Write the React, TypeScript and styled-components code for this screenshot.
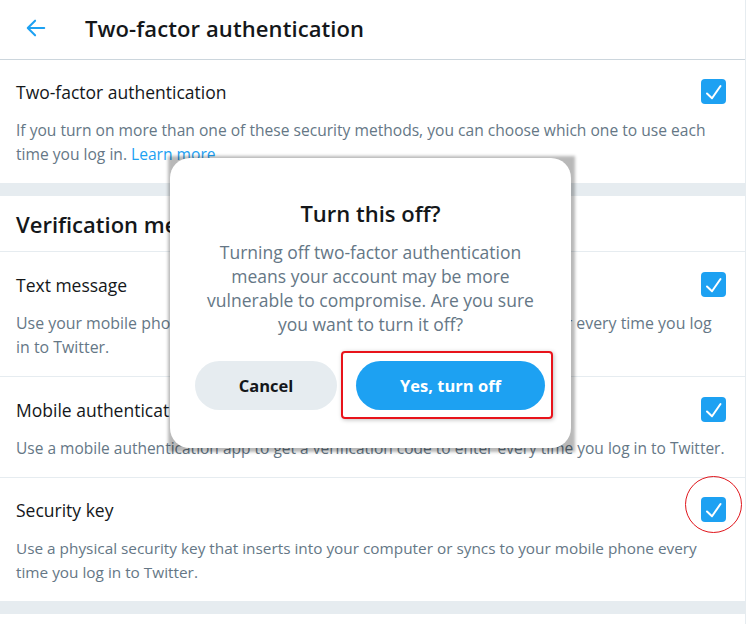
import React from "react";
import styled, { createGlobalStyle } from "styled-components";

const GlobalStyle = createGlobalStyle`
  html, body { margin: 0; padding: 0; background: #ffffff; }
  body { font-family: "Open Sans", "Noto Sans", Arial, sans-serif; -webkit-font-smoothing: antialiased; }
  * { box-sizing: border-box; }
`;

const Page = styled.div`
  position: relative;
  width: 746px;
  min-height: 624px;
  border-right: 1px solid #e6ecf0;
  background: #fff;
`;

const Header = styled.header`
  height: 60px;
  display: flex;
  align-items: center;
  border-bottom: 1px solid #ccd6dd;
  padding: 0 0 3px 25px;
  gap: 38px;
`;

const BackButton = styled.button`
  border: none;
  background: none;
  padding: 0;
  width: 22px;
  height: 22px;
  display: flex;
  align-items: center;
  justify-content: center;
  color: #1da1f2;
  cursor: pointer;
`;

const HeaderTitle = styled.h1`
  margin: 0;
  font-size: 22px;
  font-weight: 600;
  color: #14171a;
  letter-spacing: 0.1px;
`;

const Band = styled.div`
  height: 13px;
  background: #e6ecf0;
`;

const Row = styled.section<{ $divider?: boolean }>`
  padding: ${(p) => (p.$divider ? "20px" : "19px")} 16px 17px;
  border-bottom: ${(p) => (p.$divider ? "1px solid #e6ecf0" : "none")};
`;

const RowTop = styled.div`
  display: flex;
  align-items: center;
  justify-content: space-between;
  height: 25px;
`;

const RowTitle = styled.div`
  font-size: 17.5px;
  color: #14171a;
  font-weight: 400;
`;

const RowDesc = styled.p<{ $size?: number }>`
  margin: 14px 0 0;
  font-size: ${(p) => p.$size ?? 15.5}px;
  line-height: 24px;
  color: #657786;
  white-space: nowrap;
`;

const Link = styled.a`
  color: #1da1f2;
  text-decoration: none;
`;

const SectionHeader = styled.h2`
  margin: 0;
  height: 56px;
  display: flex;
  align-items: center;
  padding: 0 16px;
  font-size: 22px;
  font-weight: 600;
  color: #14171a;
  border-bottom: 1px solid #e6ecf0;
`;

const CheckWrap = styled.div`
  position: relative;
  width: 25px;
  height: 25px;
  margin-right: 3px;
`;

const CheckBox = styled.div`
  width: 25px;
  height: 25px;
  border-radius: 4px;
  background: #1da1f2;
  display: flex;
  align-items: center;
  justify-content: center;
`;

const RedCircle = styled.div`
  position: absolute;
  left: -16px;
  top: -21px;
  width: 57px;
  height: 57px;
  border: 1.5px solid #e0151b;
  border-radius: 50%;
  pointer-events: none;
`;

const Modal = styled.div`
  position: absolute;
  left: 170px;
  top: 158px;
  width: 401px;
  height: 290px;
  background: #fff;
  border-radius: 20px;
  padding: 41px 20px 0;
  display: flex;
  flex-direction: column;
  align-items: center;
  z-index: 1;
  &::before {
    content: "";
    position: absolute;
    left: -2px;
    top: -2px;
    right: -4px;
    bottom: -4px;
    background: rgba(0, 0, 0, 0.28);
    filter: blur(1.5px);
    z-index: -2;
  }
  &::after {
    content: "";
    position: absolute;
    inset: 0;
    background: #fff;
    border-radius: 20px;
    z-index: -1;
  }
`;

const ModalTitle = styled.h3`
  margin: 0;
  font-size: 22px;
  line-height: 28px;
  font-weight: 600;
  color: #14171a;
`;

const ModalText = styled.p`
  margin: 13px 0 0;
  font-size: 17.5px;
  line-height: 24px;
  color: #657786;
  text-align: center;
  white-space: nowrap;
`;

const ButtonRow = styled.div`
  margin-top: 25px;
  display: flex;
  gap: 19px;
  width: 100%;
  padding-left: 5px;
`;

const Button = styled.button<{ $primary?: boolean; $w: number }>`
  position: relative;
  width: ${(p) => p.$w}px;
  height: 49px;
  border: none;
  border-radius: 25px;
  font-family: inherit;
  font-size: 16.5px;
  font-weight: 700;
  background: ${(p) => (p.$primary ? "#1da1f2" : "#e6ecf0")};
  color: ${(p) => (p.$primary ? "#ffffff" : "#14171a")};
  cursor: pointer;
`;

const Highlight = styled.span`
  position: absolute;
  left: -15px;
  top: -10px;
  right: -8px;
  bottom: -9px;
  border: 2px solid #e8131b;
  border-radius: 4px;
  box-shadow: 1px 1px 4px rgba(0, 0, 0, 0.25);
  pointer-events: none;
`;

function Check({ circled }: { circled?: boolean }) {
  return (
    <CheckWrap>
      <CheckBox>
        <svg width="25" height="25" viewBox="0 0 25 25" fill="none">
          <path d="M6 14.5 L11 19.2 L19.5 7" stroke="#fff" strokeWidth="2" strokeLinecap="round" strokeLinejoin="round" />
        </svg>
      </CheckBox>
      {circled && <RedCircle />}
    </CheckWrap>
  );
}

export default function App() {
  return (
    <>
      <GlobalStyle />
      <Page>
        <Header>
          <BackButton aria-label="Back">
            <svg width="22" height="22" viewBox="0 0 24 24" fill="none">
              <path d="M21 12H3.5M11 4l-8 8 8 8" stroke="currentColor" strokeWidth="2.2" strokeLinecap="round" strokeLinejoin="round" />
            </svg>
          </BackButton>
          <HeaderTitle>Two-factor authentication</HeaderTitle>
        </Header>

        <Row>
          <RowTop>
            <RowTitle>Two-factor authentication</RowTitle>
            <Check />
          </RowTop>
          <RowDesc $size={15.6}>
            If you turn on more than one of these security methods, you can choose which one to use each
            <br />
            time you log in. <Link href="#">Learn more</Link>
          </RowDesc>
        </Row>
        <Band />

        <SectionHeader>Verification methods</SectionHeader>
        <Row $divider>
          <RowTop>
            <RowTitle>Text message</RowTitle>
            <Check />
          </RowTop>
          <RowDesc $size={15.9}>
            Use your mobile phone to receive a text message with a login code to enter every time you log
            <br />
            in to Twitter.
          </RowDesc>
        </Row>
        <Row $divider>
          <RowTop>
            <RowTitle>Mobile authentication app</RowTitle>
            <Check />
          </RowTop>
          <RowDesc>Use a mobile authentication app to get a verification code to enter every time you log in to Twitter.</RowDesc>
        </Row>
        <Row>
          <RowTop>
            <RowTitle>Security key</RowTitle>
            <Check circled />
          </RowTop>
          <RowDesc $size={15.35}>
            Use a physical security key that inserts into your computer or syncs to your mobile phone every
            <br />
            time you log in to Twitter.
          </RowDesc>
        </Row>
        <Band />

        <Modal role="dialog" aria-modal="true">
          <ModalTitle>Turn this off?</ModalTitle>
          <ModalText>
            Turning off two-factor authentication
            <br />
            means your account may be more
            <br />
            vulnerable to compromise. Are you sure
            <br />
            you want to turn it off?
          </ModalText>
          <ButtonRow>
            <Button $w={142}>Cancel</Button>
            <Button $primary $w={189}>
              Yes, turn off
              <Highlight />
            </Button>
          </ButtonRow>
        </Modal>
      </Page>
    </>
  );
}
